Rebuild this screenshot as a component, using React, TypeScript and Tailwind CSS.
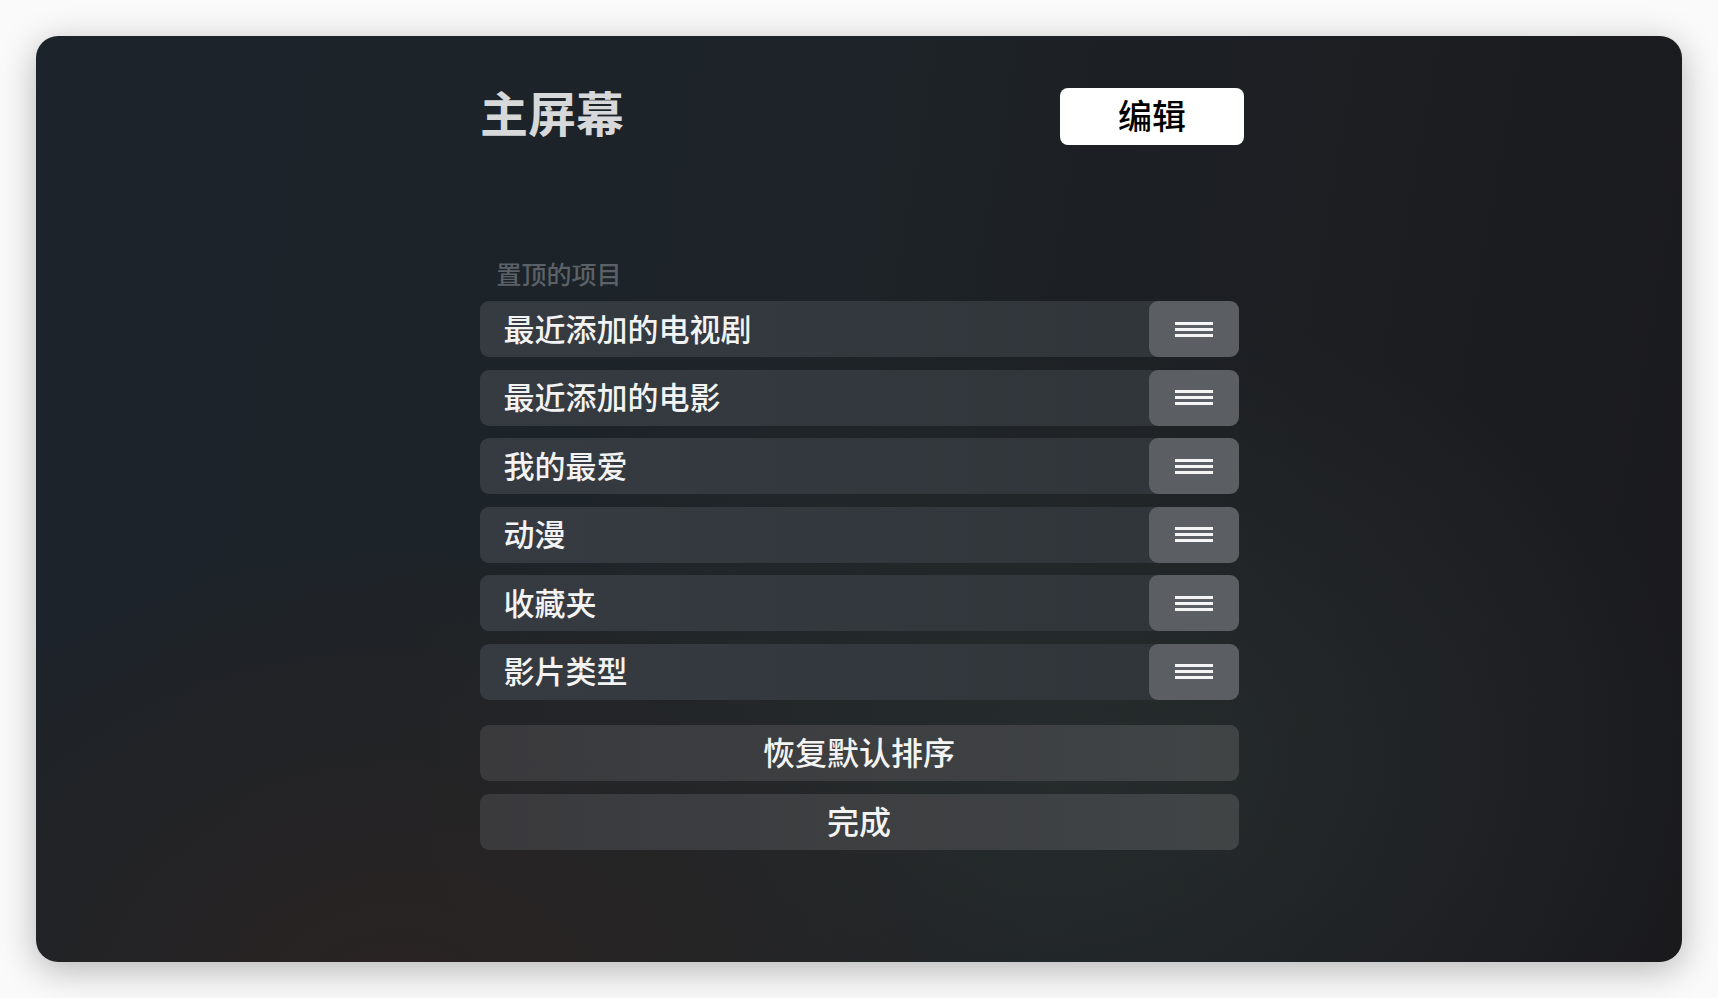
import React from "react";

const pinned = [
  "最近添加的电视剧",
  "最近添加的电影",
  "我的最爱",
  "动漫",
  "收藏夹",
  "影片类型",
];

function Handle() {
  return (
    <div className="flex h-full w-[90px] shrink-0 flex-col items-center justify-center gap-[3px] rounded-[9px] bg-[#5b5f63]">
      <div className="h-[3px] w-[38px] bg-[#f4f4f4]" />
      <div className="h-[3px] w-[38px] bg-[#f4f4f4]" />
      <div className="h-[3px] w-[38px] bg-[#f4f4f4]" />
    </div>
  );
}

function Row({ label }: { label: string }) {
  return (
    <div className="flex h-14 items-center rounded-[9px] bg-[linear-gradient(90deg,#363b41,#30353a)]">
      <span className="flex-1 pb-[4px] pl-6 text-[31px] font-medium leading-none text-[#f3f3f3]">
        {label}
      </span>
      <Handle />
    </div>
  );
}

function WideButton({ label }: { label: string }) {
  return (
    <button className="flex h-14 w-full items-center justify-center rounded-[9px] bg-[linear-gradient(90deg,#3a3a3d,#404445)] pb-[4px] text-[32px] font-medium leading-none text-[#f3f3f3]">
      {label}
    </button>
  );
}

export default function App() {
  return (
    <div
      className="flex min-h-screen bg-[#fafafa] p-9"
      style={{ fontFamily: '"Noto Sans CJK SC", "Noto Sans", sans-serif' }}
    >
      <div className="flex h-[926px] w-full flex-col items-center overflow-hidden rounded-[22px] bg-[radial-gradient(ellipse_at_22%_105%,#2a2322_0%,transparent_35%),radial-gradient(ellipse_at_62%_78%,#262c2c_0%,transparent_45%),linear-gradient(100deg,#1c232a_0%,#1d2328_45%,#1c1d21_80%,#1a1a1d_100%)] shadow-[0_8px_36px_rgba(0,0,0,0.28)]">
        <div className="ml-[4px] mt-[51px] flex w-[766px] items-center justify-between pl-[2px]">
          <h1 className="mb-[10px] text-[48px] font-bold leading-none text-[#d6d8da]">主屏幕</h1>
          <button className="flex h-[57px] w-[184px] items-center justify-center rounded-[8px] bg-white pb-[2px] text-[34px] font-medium leading-none text-black">
            编辑
          </button>
        </div>

        <div className="mt-[114px] flex w-[759px] flex-col">
          <div className="mb-[14px] pl-[17px] text-[25px] font-medium leading-[28px] text-[#5b6167]">
            置顶的项目
          </div>
          <div className="flex flex-col gap-[12.6px]">
            {pinned.map((p) => (
              <Row key={p} label={p} />
            ))}
          </div>
          <div className="mt-[25px] flex flex-col gap-[13px]">
            <WideButton label="恢复默认排序" />
            <WideButton label="完成" />
          </div>
        </div>
      </div>
    </div>
  );
}
